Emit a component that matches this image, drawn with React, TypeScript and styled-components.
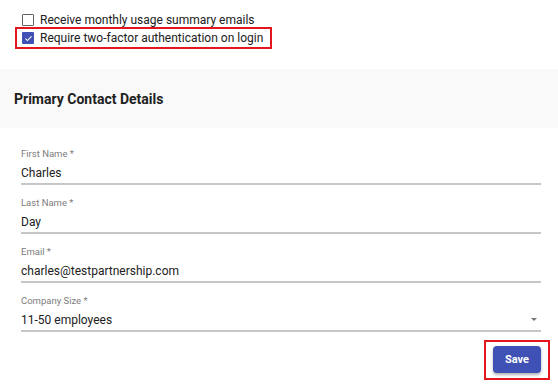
import React from 'react'
import styled, { createGlobalStyle } from 'styled-components'

const GlobalStyle = createGlobalStyle`
  html, body {
    margin: 0;
    padding: 0;
    background: #ffffff;
    font-family: Roboto, "Liberation Sans", Arial, sans-serif;
    color: #212121;
  }
`

const Page = styled.div`
  width: 558px;
  height: 389px;
  overflow: hidden;
  background: #ffffff;
`

const Options = styled.div`
  padding: 11px 0 0 17px;
  display: flex;
  flex-direction: column;
  align-items: flex-start;
`

const OptionRow = styled.label<{ $highlight?: boolean }>`
  display: flex;
  align-items: center;
  gap: 6px;
  height: 18px;
  padding: 0 7px 0 5px;
  font-size: 12px;
  color: #212121;
  outline: ${p => (p.$highlight ? '2px solid #e3161e' : 'none')};
`

const Box = styled.span<{ $checked?: boolean }>`
  width: 12px;
  height: 12px;
  box-sizing: border-box;
  border-radius: 1px;
  display: flex;
  align-items: center;
  justify-content: center;
  border: ${p => (p.$checked ? 'none' : '1.5px solid #5f6368')};
  background: ${p => (p.$checked ? '#3f51b5' : '#ffffff')};
`

const SectionHeader = styled.div`
  margin-top: 22px;
  height: 59px;
  background: #f9f9f9;
  display: flex;
  align-items: center;
  padding-left: 14px;
`

const SectionTitle = styled.h2`
  margin: 0;
  font-size: 14px;
  font-weight: 700;
  color: #212121;
`

const Form = styled.div`
  padding: 20px 17px 0 21px;
  display: flex;
  flex-direction: column;
  gap: 12px;
`

const Field = styled.div`
  position: relative;
  display: flex;
  flex-direction: column;
`

const FieldLabel = styled.span`
  font-size: 9.5px;
  line-height: 12px;
  color: #7d7d7d;
`

const FieldValue = styled.span`
  font-size: 12px;
  line-height: 18px;
  color: #212121;
  margin-top: 4px;
  padding-bottom: 1px;
  border-bottom: 2px solid #c6c6c6;
`

const Arrow = styled.span`
  position: absolute;
  right: 4px;
  top: 23px;
  width: 0;
  height: 0;
  border-left: 3.5px solid transparent;
  border-right: 3.5px solid transparent;
  border-top: 3.5px solid #757575;
`

const Footer = styled.div`
  display: flex;
  justify-content: flex-end;
  padding: 8px 8px 0 0;
`

const SaveFrame = styled.div`
  border: 2px solid #e3161e;
  padding: 4px 7px 5px 7px;
`

const SaveButton = styled.button`
  display: block;
  width: 48px;
  height: 27px;
  padding: 0;
  border: none;
  border-radius: 4px;
  background: #3f51b5;
  color: #ffffff;
  font-family: Roboto, "Liberation Sans", Arial, sans-serif;
  font-size: 11px;
  font-weight: 700;
  box-shadow: 0 2px 3px rgba(0, 0, 0, 0.3);
  cursor: pointer;
`

const fields = [
  { label: 'First Name *', value: 'Charles' },
  { label: 'Last Name *', value: 'Day' },
  { label: 'Email *', value: 'charles@testpartnership.com' },
  { label: 'Company Size *', value: '11-50 employees', select: true },
]

const Check = () => (
  <svg width="9" height="9" viewBox="0 0 24 24">
    <path d="M4 12.5l5 5L20 6.5" fill="none" stroke="#ffffff" strokeWidth="3" />
  </svg>
)

const App: React.FC = () => {
  return (
    <Page>
      <GlobalStyle />
      <Options>
        <OptionRow>
          <Box />
          Receive monthly usage summary emails
        </OptionRow>
        <OptionRow $highlight>
          <Box $checked>
            <Check />
          </Box>
          Require two-factor authentication on login
        </OptionRow>
      </Options>
      <SectionHeader>
        <SectionTitle>Primary Contact Details</SectionTitle>
      </SectionHeader>
      <Form>
        {fields.map(f => (
          <Field key={f.label}>
            <FieldLabel>{f.label}</FieldLabel>
            <FieldValue>{f.value}</FieldValue>
            {f.select ? <Arrow /> : null}
          </Field>
        ))}
      </Form>
      <Footer>
        <SaveFrame>
          <SaveButton>Save</SaveButton>
        </SaveFrame>
      </Footer>
    </Page>
  )
}

export default App
